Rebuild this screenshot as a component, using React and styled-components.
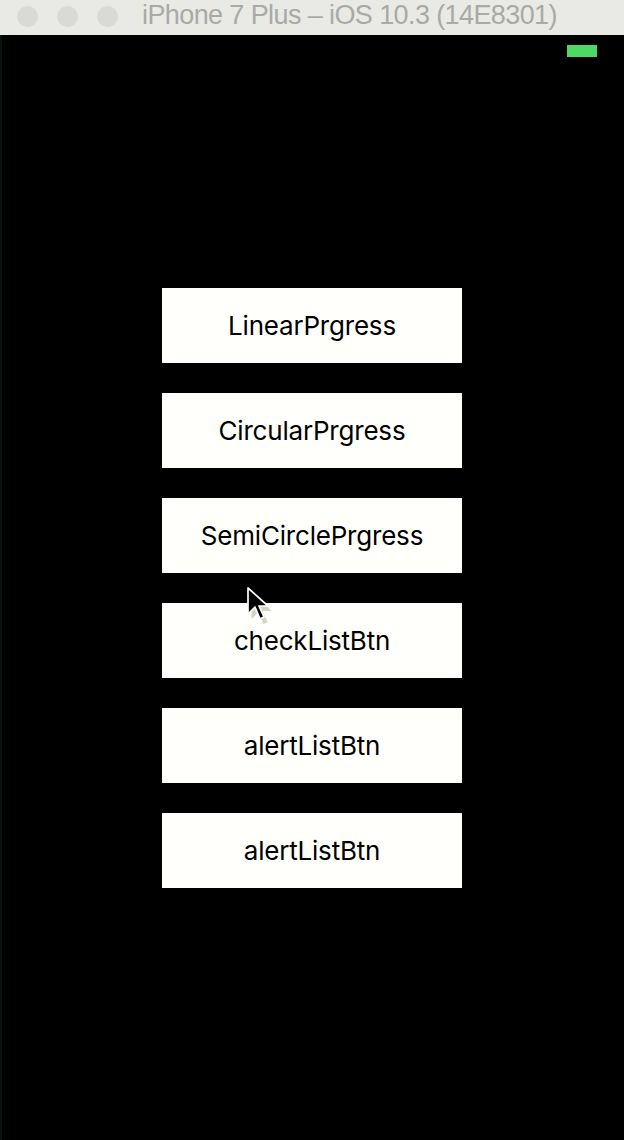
import React from 'react';
import styled, {createGlobalStyle} from 'styled-components';

const GlobalStyle = createGlobalStyle`
    html, body {
        margin:0;
        padding:0;
        background:#000;
    }
    #root {
        width:624px;
        height:1140px;
    }
`;

const Window = styled.div`
    position:relative;
    width:624px;
    height:1140px;
    display:flex;
    flex-direction:column;
    background:#000;
    overflow:hidden;
`;

const TitleBar = styled.div`
    height:35px;
    display:flex;
    align-items:center;
    background:#e9e9e6;
    padding-left:17px;
    box-sizing:border-box;
`;

const Light = styled.div`
    width:21px;
    height:21px;
    border-radius:50%;
    background:#d9d9d7;
    margin-right:19px;
    margin-top:-3px;
`;

const Title = styled.div`
    margin-left:5px;
    margin-top:-4px;
    font-family:"Liberation Sans", Arial, sans-serif;
    font-size:27px;
    letter-spacing:-0.6px;
    color:#a9a9a7;
    white-space:nowrap;
`;

const Screen = styled.div`
    flex:1;
    display:flex;
    flex-direction:column;
    border-left:2px solid #07140e;
`;

const StatusBar = styled.div`
    height:22px;
    display:flex;
    justify-content:flex-end;
    align-items:flex-end;
    padding-right:27px;
`;

const Battery = styled.div`
    width:30px;
    height:12px;
    background:#4cd964;
`;

const ButtonList = styled.div`
    display:flex;
    flex-direction:column;
    align-items:center;
    gap:30px;
    padding-top:231px;
    margin-left:-2px;
`;

const MenuButton = styled.button`
    width:300px;
    height:75px;
    border:none;
    border-radius:0;
    background:#fffffb;
    color:#000;
    font-family:Inter, "Liberation Sans", sans-serif;
    font-size:26px;
    letter-spacing:-0.2px;
    padding:0;
    display:flex;
    align-items:center;
    justify-content:center;
`;

const Cursor = styled.svg`
    position:absolute;
    left:245px;
    top:585px;
`;

const buttons = [
    'LinearPrgress',
    'CircularPrgress',
    'SemiCirclePrgress',
    'checkListBtn',
    'alertListBtn',
    'alertListBtn',
];

const App = () => {
    return (
        <>
            <GlobalStyle />
            <Window>
                <TitleBar>
                    <Light />
                    <Light />
                    <Light />
                    <Title>iPhone 7 Plus – iOS 10.3 (14E8301)</Title>
                </TitleBar>
                <Screen>
                    <StatusBar>
                        <Battery />
                    </StatusBar>
                    <ButtonList>
                        {buttons.map((label, i) => (
                            <MenuButton key={i}>{label}</MenuButton>
                        ))}
                    </ButtonList>
                </Screen>
                <Cursor width="32" height="44" viewBox="0 0 32 44">
                    <path d="M5 5 L5 32 L12 25 L17 37 L21 35 L16 24 L25 24 Z" fill="rgba(130,130,100,0.35)" transform="translate(1.5,2)" />
                    <path d="M3 3 L3 29 L10 22 L15 34 L19 32 L14 21 L23 21 Z" fill="#000" stroke="#fff" strokeWidth="1.7" strokeLinejoin="round" />
                </Cursor>
            </Window>
        </>
    );
};

export default App;
